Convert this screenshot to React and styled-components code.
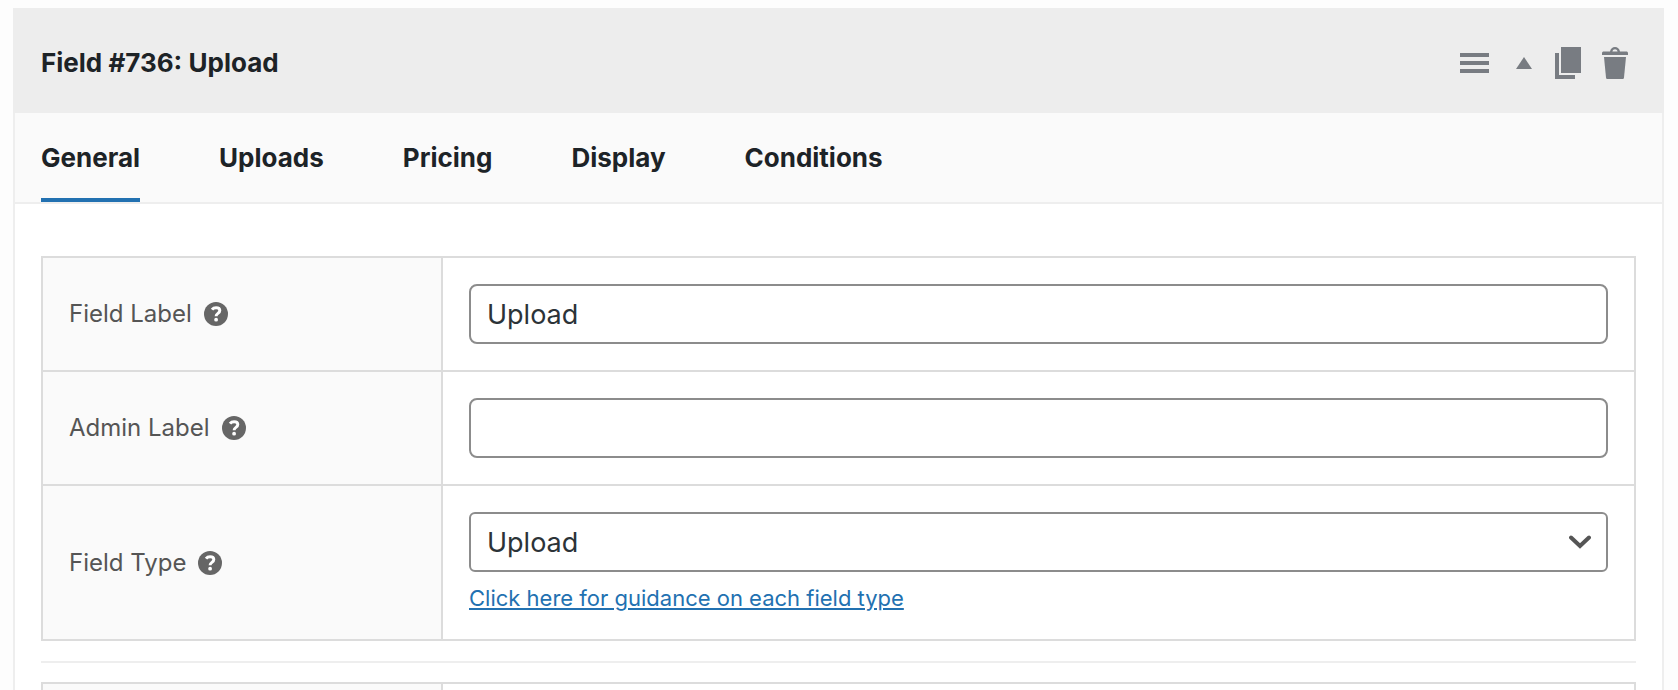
import { useState } from "react";
import styled, { createGlobalStyle, css } from "styled-components";

const GlobalStyle = createGlobalStyle`
  * {
    box-sizing: border-box;
  }

  body {
    margin: 0;
    background: #fdfdfd;
    color: #1d2327;
    font-family: Inter, "Liberation Sans", sans-serif;
  }
`;

const Page = styled.main`
  height: 100vh;
  overflow: hidden;
  padding: 8px 14px 0 13px;
`;

const Panel = styled.section`
  min-height: 100vh;
  background: #fff;
  border: 2px solid #eee;
  border-top: 0;
`;

const Header = styled.header`
  display: flex;
  align-items: center;
  justify-content: space-between;
  margin: 0 -2px;
  padding: 4px 36px 0 28px;
  height: 105px;
  background: #ededed;
`;

const Title = styled.h2`
  margin: 0;
  font-size: 26px;
  font-weight: 700;
  line-height: 32px;
`;

const Actions = styled.div`
  display: flex;
  align-items: center;
`;

const IconButton = styled.button`
  display: flex;
  margin: 0 0 0 ${({ $gap = 0 }) => $gap}px;
  padding: 0;
  border: 0;
  background: none;
  color: #787c82;
  cursor: pointer;
`;

const Tabs = styled.div`
  display: flex;
  gap: 79px;
  padding: 0 26px;
  background: #fafafa;
  border-bottom: 2px solid #eee;
`;

const Tab = styled.button`
  height: 89px;
  padding: 4px 0 0;
  border: 0;
  border-bottom: 4px solid transparent;
  background: none;
  color: inherit;
  font: inherit;
  font-size: 26px;
  font-weight: 700;
  line-height: 32px;
  cursor: pointer;

  ${({ $active }) =>
    $active &&
    css`
      border-bottom-color: #2271b1;
    `}
`;

const Body = styled.div`
  padding: 52px 26px 0;
`;

const Settings = styled.table`
  width: 100%;
  border: 2px solid #dcdcdc;
  border-spacing: 0;

  tr + tr > * {
    border-top: 2px solid #dcdcdc;
  }
`;

const LabelCell = styled.th`
  width: 400px;
  padding: 26px;
  border-right: 2px solid #dcdcdc;
  background: #fafafa;
  color: #555;
  font-weight: 400;
  text-align: left;
`;

const LabelRow = styled.div`
  display: flex;
  align-items: center;
  gap: 12px;
  font-size: 24px;
  line-height: 32px;
`;

const HelpButton = styled(IconButton)`
  color: #666;
`;

const FieldCell = styled.td`
  padding: 26px;
`;

const control = css`
  display: block;
  width: 100%;
  height: 60px;
  padding: 0 16px;
  border: 2px solid #8c8c8c;
  border-radius: 8px;
  background: #fff;
  color: #2c3338;
  font: inherit;
  font-size: 27px;
`;

const TextInput = styled.input`
  ${control}
`;

const SelectBox = styled.div`
  display: grid;
  align-items: center;

  > * {
    grid-area: 1 / 1;
  }

  svg {
    justify-self: end;
    margin-right: 17px;
    pointer-events: none;
  }
`;

const Select = styled.select`
  ${control}
  border-radius: 6px;
  appearance: none;
`;

const GuideLink = styled.a`
  display: block;
  width: fit-content;
  margin-top: 11px;
  color: #2271b1;
  font-size: 22px;
  line-height: 30px;
`;

const Divider = styled.hr`
  margin: 20px 0 19px;
  border: 0;
  border-top: 2px solid #eee;
`;

const MenuIcon = () => (
  <svg width="29" height="20" fill="currentColor" aria-hidden="true">
    <path d="M0 0h29v4H0zM0 8h29v4H0zM0 16h29v4H0z" />
  </svg>
);

const CollapseIcon = () => (
  <svg width="16" height="12" fill="currentColor" aria-hidden="true">
    <path d="M8 0l8 12H0z" />
  </svg>
);

const CopyIcon = () => (
  <svg width="26" height="32" fill="currentColor" aria-hidden="true">
    <path d="M6 0h20v26H6zM0 6h4v22h16v4H0z" />
  </svg>
);

const TrashIcon = () => (
  <svg width="26" height="32" fill="currentColor" aria-hidden="true">
    <path
      fillRule="evenodd"
      d="M8 4.500C8.600 1.500 10.500 0 13 0s4.400 1.500 5 4.500h6.200c1.200 0 1.800.7 1.800 1.700V8H0V6.200c0-1 .6-1.700 1.800-1.700zm2.400 0h5.200C15.200 3 14.300 2.200 13 2.200S10.800 3 10.400 4.500z"
    />
    <path d="M2 10h22l-2 20.500c-.1 1-.7 1.500-1.600 1.500H5.600c-.9 0-1.500-.5-1.600-1.500z" />
  </svg>
);

const HelpIcon = () => (
  <svg width="24" height="24" viewBox="0 0 24 24" aria-hidden="true">
    <circle cx="12" cy="12" r="12" fill="currentColor" />
    <path
      d="M8 7.600C9 6.300 10.400 5.700 12.100 5.700c2.200 0 3.700 1.100 3.700 2.900 0 2.900-3.700 2.700-3.700 5.600"
      fill="none"
      stroke="#fff"
      strokeWidth="3"
    />
    <circle cx="12.100" cy="17.700" r="1.900" fill="#fff" />
  </svg>
);

const ChevronIcon = () => (
  <svg width="22" height="14" fill="none" aria-hidden="true">
    <path
      d="M2 2.500l9 8.500 9-8.500"
      stroke="#555"
      strokeWidth="4"
      strokeLinecap="round"
    />
  </svg>
);

const TABS = ["General", "Uploads", "Pricing", "Display", "Conditions"];

const FIELD_TYPES = ["Upload", "Text", "Textarea", "Number", "Checkbox"];

function SettingRow({ id, label, children }) {
  return (
    <tr>
      <LabelCell scope="row">
        <LabelRow>
          <label htmlFor={id}>{label}</label>
          <HelpButton type="button" aria-label={`Help: ${label}`}>
            <HelpIcon />
          </HelpButton>
        </LabelRow>
      </LabelCell>
      <FieldCell>{children}</FieldCell>
    </tr>
  );
}

export default function App() {
  const [activeTab, setActiveTab] = useState("General");
  const [fieldLabel, setFieldLabel] = useState("Upload");
  const [adminLabel, setAdminLabel] = useState("");
  const [fieldType, setFieldType] = useState("Upload");

  return (
    <Page>
      <GlobalStyle />
      <Panel>
        <Header>
          <Title>Field #736: {fieldLabel}</Title>
          <Actions>
            <IconButton type="button" aria-label="Reorder field">
              <MenuIcon />
            </IconButton>
            <IconButton type="button" aria-label="Collapse field" $gap={27}>
              <CollapseIcon />
            </IconButton>
            <IconButton type="button" aria-label="Duplicate field" $gap={23}>
              <CopyIcon />
            </IconButton>
            <IconButton type="button" aria-label="Delete field" $gap={21}>
              <TrashIcon />
            </IconButton>
          </Actions>
        </Header>

        <Tabs role="tablist">
          {TABS.map((tab) => (
            <Tab
              key={tab}
              type="button"
              role="tab"
              aria-selected={tab === activeTab}
              $active={tab === activeTab}
              onClick={() => setActiveTab(tab)}
            >
              {tab}
            </Tab>
          ))}
        </Tabs>

        <Body>
          <Settings>
            <tbody>
              <SettingRow id="field-label" label="Field Label">
                <TextInput
                  id="field-label"
                  type="text"
                  value={fieldLabel}
                  onChange={(e) => setFieldLabel(e.target.value)}
                />
              </SettingRow>
              <SettingRow id="admin-label" label="Admin Label">
                <TextInput
                  id="admin-label"
                  type="text"
                  value={adminLabel}
                  onChange={(e) => setAdminLabel(e.target.value)}
                />
              </SettingRow>
              <SettingRow id="field-type" label="Field Type">
                <SelectBox>
                  <Select
                    id="field-type"
                    value={fieldType}
                    onChange={(e) => setFieldType(e.target.value)}
                  >
                    {FIELD_TYPES.map((type) => (
                      <option key={type}>{type}</option>
                    ))}
                  </Select>
                  <ChevronIcon />
                </SelectBox>
                <GuideLink href="#field-types">
                  Click here for guidance on each field type
                </GuideLink>
              </SettingRow>
            </tbody>
          </Settings>

          <Divider />

          <Settings>
            <tbody>
              <tr>
                <LabelCell scope="row" />
                <FieldCell />
              </tr>
            </tbody>
          </Settings>
        </Body>
      </Panel>
    </Page>
  );
}
